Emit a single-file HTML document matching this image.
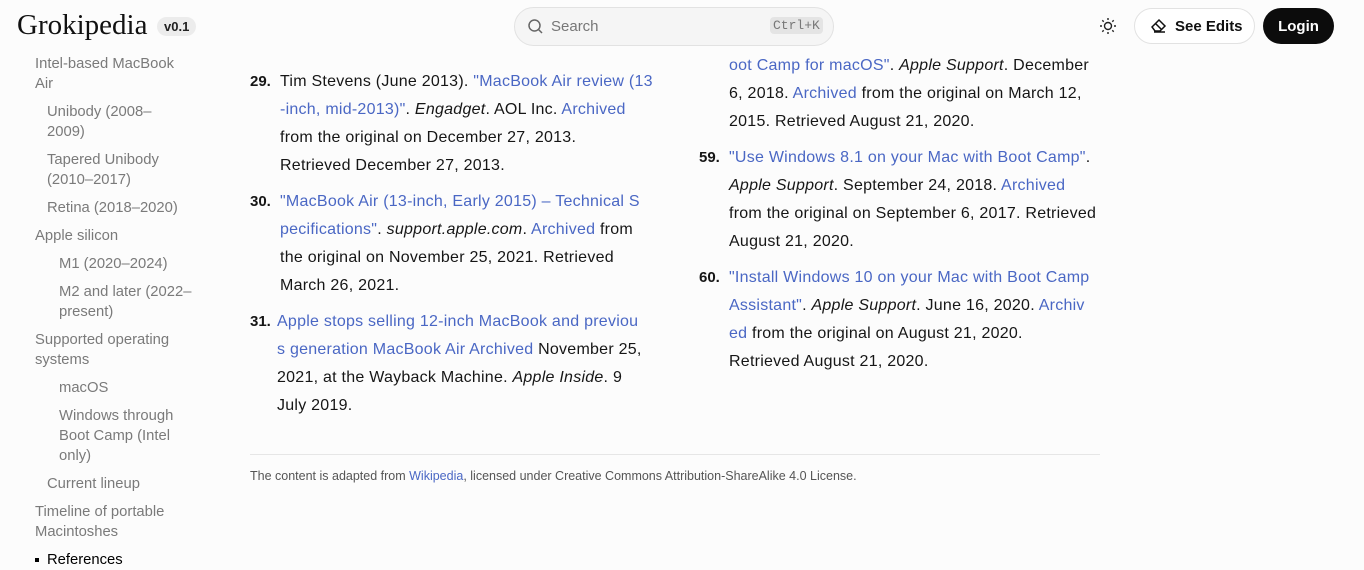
<!DOCTYPE html>
<html><head><meta charset="utf-8"><style>
body{margin:0;width:1364px;height:563px;overflow:hidden;background:#fcfcfc;font-family:"Liberation Sans",sans-serif;position:relative;color:#111}
.a{position:absolute;white-space:nowrap}
.s{font-size:14.8px;color:#7a7a7a;line-height:20px}
.m{font-size:16px;letter-spacing:0.25px;line-height:28px;color:#161616}
.n{font-weight:bold;font-size:15px;letter-spacing:0}
.l{color:#4a67c4}
i{font-style:italic}
</style></head><body>
<div class="a" style="left:17px;top:9px;font-family:'Liberation Serif',serif;font-size:29px;color:#111">Grokipedia</div>
<div class="a" style="left:157px;top:17px;background:#ececec;border-radius:12px;padding:2px 7px;font-size:13px;font-weight:bold;color:#222">v0.1</div>
<div class="a" style="left:514px;top:7px;width:318px;height:37px;border:1px solid #e2e2e2;border-radius:20px;background:#f5f5f5"></div>
<svg class="a" style="left:527px;top:18px" width="17" height="17" viewBox="0 0 17 17"><circle cx="7.5" cy="7.5" r="5.5" fill="none" stroke="#666" stroke-width="1.5"/><path d="M11.5 11.5L15 15" stroke="#666" stroke-width="1.5"/></svg>
<div class="a" style="left:551px;top:18px;font-size:15px;color:#777">Search</div>
<div class="a" style="left:770px;top:17px;background:#e4e4e4;border-radius:4px;padding:1px 3px;font-size:13px;color:#777;font-family:'Liberation Mono',monospace">Ctrl+K</div>
<svg class="a" style="left:1099px;top:17px" width="18" height="18" viewBox="0 0 18 18"><circle cx="9" cy="9" r="3.5" fill="none" stroke="#222" stroke-width="1.4"/><g stroke="#222" stroke-width="1.4"><path d="M9 1v2M9 15v2M1 9h2M15 9h2M3.3 3.3l1.4 1.4M13.3 13.3l1.4 1.4M3.3 14.7l1.4-1.4M13.3 4.7l1.4-1.4"/></g></svg>
<div class="a" style="left:1134px;top:8px;width:119px;height:34px;border:1px solid #e2e2e2;border-radius:18px;background:#fff"></div>
<svg class="a" style="left:1150px;top:18px" width="18" height="16" viewBox="0 0 18 16"><path d="M2 9l7-7 6 6-5 5H5z M6 6l6 6 M4 14h11" fill="none" stroke="#111" stroke-width="1.5"/></svg>
<div class="a" style="left:1175px;top:18px;font-size:15px;font-weight:bold;color:#111">See Edits</div>
<div class="a" style="left:1263px;top:8px;width:71px;height:36px;border-radius:18px;background:#0c0c0c;color:#fff;font-size:15px;font-weight:bold;text-align:center;line-height:37px">Login</div>

<div class="a s" style="left:35px;top:54px">Intel-based MacBook<br>Air</div>
<div class="a s" style="left:47px;top:102px">Unibody (2008–<br>2009)</div>
<div class="a s" style="left:47px;top:150px">Tapered Unibody<br>(2010–2017)</div>
<div class="a s" style="left:47px;top:198px">Retina (2018–2020)</div>
<div class="a s" style="left:35px;top:226px">Apple silicon</div>
<div class="a s" style="left:59px;top:254px">M1 (2020–2024)</div>
<div class="a s" style="left:59px;top:282px">M2 and later (2022–<br>present)</div>
<div class="a s" style="left:35px;top:330px">Supported operating<br>systems</div>
<div class="a s" style="left:59px;top:378px">macOS</div>
<div class="a s" style="left:59px;top:406px">Windows through<br>Boot Camp (Intel<br>only)</div>
<div class="a s" style="left:47px;top:474px">Current lineup</div>
<div class="a s" style="left:35px;top:502px">Timeline of portable<br>Macintoshes</div>
<div class="a" style="left:35px;top:558px;width:4px;height:4px;background:#000"></div>
<div class="a s" style="left:47px;top:550px;color:#000">References</div>

<div class="a m" style="left:250px;top:68px"><span class="n">29.</span></div>
<div class="a m" style="left:280px;top:68px">Tim Stevens (June 2013). <span class="l">"MacBook Air review (13</span><br><span class="l">-inch, mid-2013)"</span>. <i>Engadget</i>. AOL Inc. <span class="l">Archived</span><br>from the original on December 27, 2013.<br>Retrieved December 27, 2013.</div>
<div class="a m" style="left:250px;top:188px"><span class="n">30.</span></div>
<div class="a m" style="left:280px;top:188px"><span class="l">"MacBook Air (13-inch, Early 2015) – Technical S</span><br><span class="l">pecifications"</span>. <i>support.apple.com</i>. <span class="l">Archived</span> from<br>the original on November 25, 2021. Retrieved<br>March 26, 2021.</div>
<div class="a m" style="left:250px;top:308px"><span class="n">31.</span></div>
<div class="a m" style="left:277px;top:308px"><span class="l">Apple stops selling 12-inch MacBook and previou</span><br><span class="l">s generation MacBook Air Archived</span> November 25,<br>2021, at the Wayback Machine. <i>Apple Inside</i>. 9<br>July 2019.</div>

<div class="a m" style="left:729px;top:52px"><span class="l">oot Camp for macOS"</span>. <i>Apple Support</i>. December<br>6, 2018. <span class="l">Archived</span> from the original on March 12,<br>2015. Retrieved August 21, 2020.</div>
<div class="a m" style="left:699px;top:144px"><span class="n">59.</span></div>
<div class="a m" style="left:729px;top:144px"><span class="l">"Use Windows 8.1 on your Mac with Boot Camp"</span>.<br><i>Apple Support</i>. September 24, 2018. <span class="l">Archived</span><br>from the original on September 6, 2017. Retrieved<br>August 21, 2020.</div>
<div class="a m" style="left:699px;top:264px"><span class="n">60.</span></div>
<div class="a m" style="left:729px;top:264px"><span class="l">"Install Windows 10 on your Mac with Boot Camp</span><br><span class="l">Assistant"</span>. <i>Apple Support</i>. June 16, 2020. <span class="l">Archiv</span><br><span class="l">ed</span> from the original on August 21, 2020.<br>Retrieved August 21, 2020.</div>

<div class="a" style="left:250px;top:454px;width:850px;height:1px;background:#e6e6e6"></div>
<div class="a" style="left:250px;top:469px;font-size:12.5px;color:#555">The content is adapted from <span class="l">Wikipedia</span>, licensed under Creative Commons Attribution-ShareAlike 4.0 License.</div>
</body></html>
